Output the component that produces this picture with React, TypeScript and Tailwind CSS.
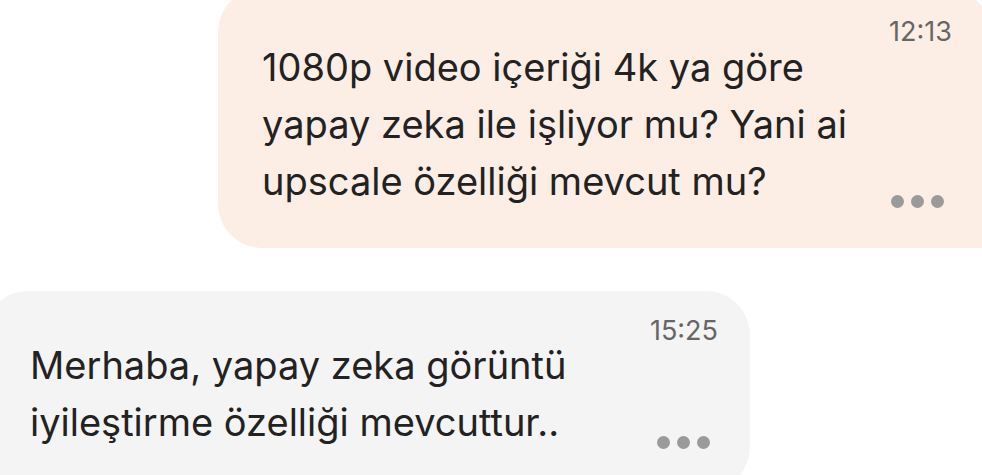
import React from 'react';

const Dots: React.FC = () => (
  <div className="flex items-center gap-[7px] mr-[8px]">
    <span className="w-[13px] h-[13px] rounded-full bg-[#9a9a9a]"></span>
    <span className="w-[13px] h-[13px] rounded-full bg-[#9a9a9a]"></span>
    <span className="w-[13px] h-[13px] rounded-full bg-[#9a9a9a]"></span>
  </div>
);

interface BubbleProps {
  lines: string[];
  time: string;
  outgoing?: boolean;
}

const Bubble: React.FC<BubbleProps> = ({ lines, time, outgoing }) => (
  <div
    className={
      outgoing
        ? 'shrink-0 self-end mt-[-12px] mr-[-8px] w-[772px] h-[260px] bg-[#fdeee5] rounded-[44px] rounded-br-none flex pl-[44px] pr-[38px]'
        : 'shrink-0 self-start ml-[-16px] mt-[43px] w-[766px] h-[200px] bg-[#f4f4f4] rounded-[44px] flex pl-[46px] pr-[32px]'
    }
  >
    <div
      className={`flex-1 text-[#222222] text-[38px] leading-[57px] ${outgoing ? 'pt-[51px]' : 'pt-[46px]'}`}
    >
      {lines.map((l) => (
        <div key={l}>{l}</div>
      ))}
    </div>
    <div
      className={`flex flex-col items-end justify-between ${outgoing ? 'pt-[30px] pb-[40px]' : 'pt-[26px] pb-[42px]'}`}
    >
      <span className="text-[#666666] text-[27px] leading-none">{time}</span>
      <Dots />
    </div>
  </div>
);

const App: React.FC = () => {
  return (
    <div className="w-[982px] h-[475px] overflow-hidden bg-white flex flex-col font-['Inter',sans-serif]">
      <Bubble
        outgoing
        time="12:13"
        lines={['1080p video içeriği 4k ya göre', 'yapay zeka ile işliyor mu? Yani ai', 'upscale özelliği mevcut mu?']}
      />
      <Bubble
        time="15:25"
        lines={['Merhaba, yapay zeka görüntü', 'iyileştirme özelliği mevcuttur..']}
      />
    </div>
  );
};

export default App;
